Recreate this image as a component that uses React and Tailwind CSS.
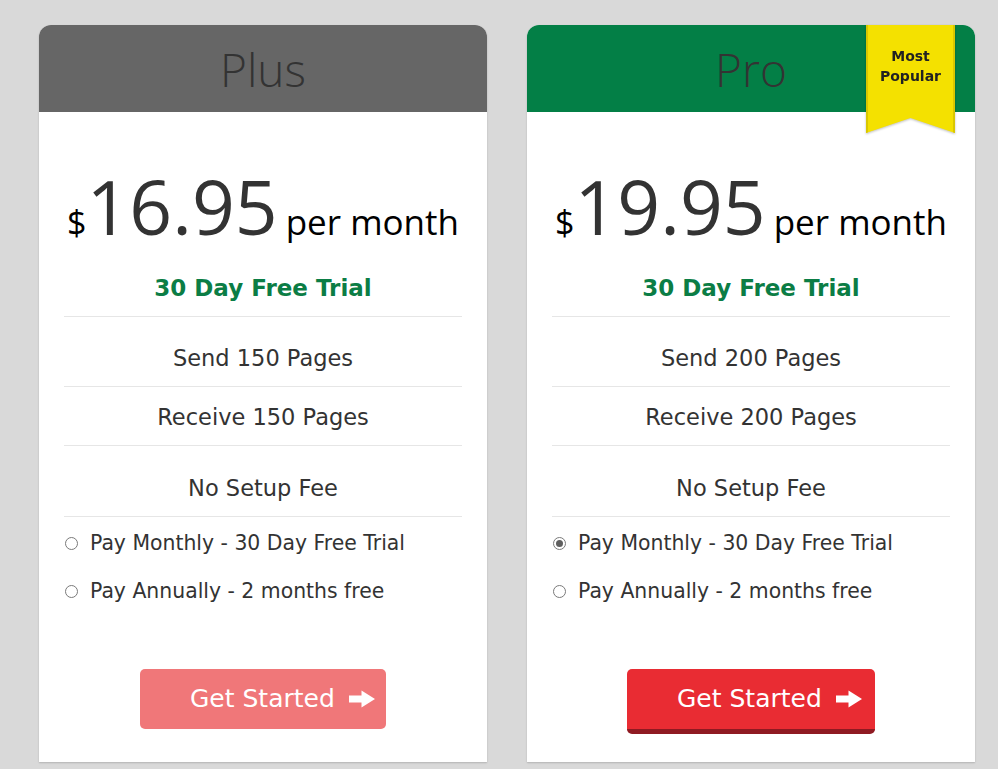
import React from 'react'

const plans = [
  {
    name: 'Plus',
    price: '16.95',
    pages: '150',
    header: 'bg-[#666666]',
    popular: false,
    monthlyChecked: false,
  },
  {
    name: 'Pro',
    price: '19.95',
    pages: '200',
    header: 'bg-[#037f46]',
    popular: true,
    monthlyChecked: true,
  },
]

function Radio({ checked }) {
  return (
    <span className="flex h-[13px] w-[13px] shrink-0 items-center justify-center rounded-full border border-[#7a7a7a] bg-white">
      {checked && <span className="h-[7px] w-[7px] rounded-full bg-[#5f5f5f]" />}
    </span>
  )
}

function Arrow() {
  return (
    <svg width="26" height="18" viewBox="0 0 26 18">
      <path d="M0 5.5 H12.5 V0.5 L26 9 L12.5 17.5 V12.5 H0 Z" fill="#fff" />
    </svg>
  )
}

function Ribbon() {
  return (
    <div className="absolute right-[20px] top-0 h-[108px] w-[89px] drop-shadow-[0_1px_1px_rgba(0,0,0,0.25)]">
      <div className="h-full w-full border-x-2 border-[#d9c700] bg-[#f4e100] pt-[21px] text-center font-['DejaVu_Sans',Verdana,sans-serif] text-[14px] font-bold leading-[20px] text-[#222] [clip-path:polygon(0_0,100%_0,100%_100%,50%_86%,0_100%)]">
        Most
        <br />
        Popular
      </div>
    </div>
  )
}

function Card({ plan }) {
  return (
    <div className="relative flex h-[737px] w-[448px] flex-col rounded-t-[12px] bg-white shadow-[0_1px_2px_rgba(0,0,0,0.18)]">
      {/* Header */}
      <div className={`flex h-[87px] items-center justify-center rounded-t-[12px] ${plan.header}`}>
        <span className="font-['Open_Sans',sans-serif] text-[46px] font-light leading-none text-[#333]">{plan.name}</span>
      </div>
      {plan.popular && <Ribbon />}

      <div className="flex flex-1 flex-col px-[25px] font-['DejaVu_Sans',Verdana,sans-serif]">
        {/* Price */}
        <div className="flex items-baseline justify-center pt-[57px] font-['Open_Sans',sans-serif] leading-none">
          <span className="text-[34px] text-black">$</span>
          <span className="text-[75px] text-[#333]">{plan.price}</span>
          <span className="ml-[8px] text-[35px] text-black">per month</span>
        </div>
        <div className="mt-[30px] border-b border-[#e6e6e6] pb-[14px] text-center text-[23px] font-bold leading-[28px] text-[#0b7d45]">
          30 Day Free Trial
        </div>

        {/* Features */}
        <div className="border-b border-[#e6e6e6] pb-[14px] pt-[27px] text-center text-[22.5px] leading-[28px] text-[#333]">
          Send {plan.pages} Pages
        </div>
        <div className="border-b border-[#e6e6e6] pb-[14px] pt-[16px] text-center text-[22.5px] leading-[28px] text-[#333]">
          Receive {plan.pages} Pages
        </div>
        <div className="border-b border-[#e6e6e6] pb-[14px] pt-[28px] text-center text-[22.5px] leading-[28px] text-[#333]">
          No Setup Fee
        </div>

        {/* Billing options */}
        <div className="flex flex-col gap-[20px] pl-[1px] pt-[12px] text-[20.4px] leading-[28px] text-[#333]">
          <label className="flex items-center gap-[12px]">
            <Radio checked={plan.monthlyChecked} />
            Pay Monthly - 30 Day Free Trial
          </label>
          <label className="flex items-center gap-[12px]">
            <Radio checked={false} />
            Pay Annually - 2 months free
          </label>
        </div>

        {/* Button */}
        <div className="mt-[64px] flex justify-center">
          {plan.popular ? (
            <button className="flex h-[65px] w-[248px] items-center gap-[14px] rounded-[5px] border-b-[5px] border-[#8f1a22] bg-[#e92c33] pl-[50px] text-[25px] text-white">
              Get Started
              <Arrow />
            </button>
          ) : (
            <button className="flex h-[60px] w-[246px] items-center gap-[14px] rounded-[5px] bg-[#f07779] pl-[50px] text-[25px] text-white">
              Get Started
              <Arrow />
            </button>
          )}
        </div>
      </div>
    </div>
  )
}

export default function App() {
  return (
    <div className="flex min-h-screen gap-[40px] bg-[#d9d9d9] pl-[39px] pt-[25px]">
      {plans.map((p) => (
        <Card key={p.name} plan={p} />
      ))}
    </div>
  )
}
